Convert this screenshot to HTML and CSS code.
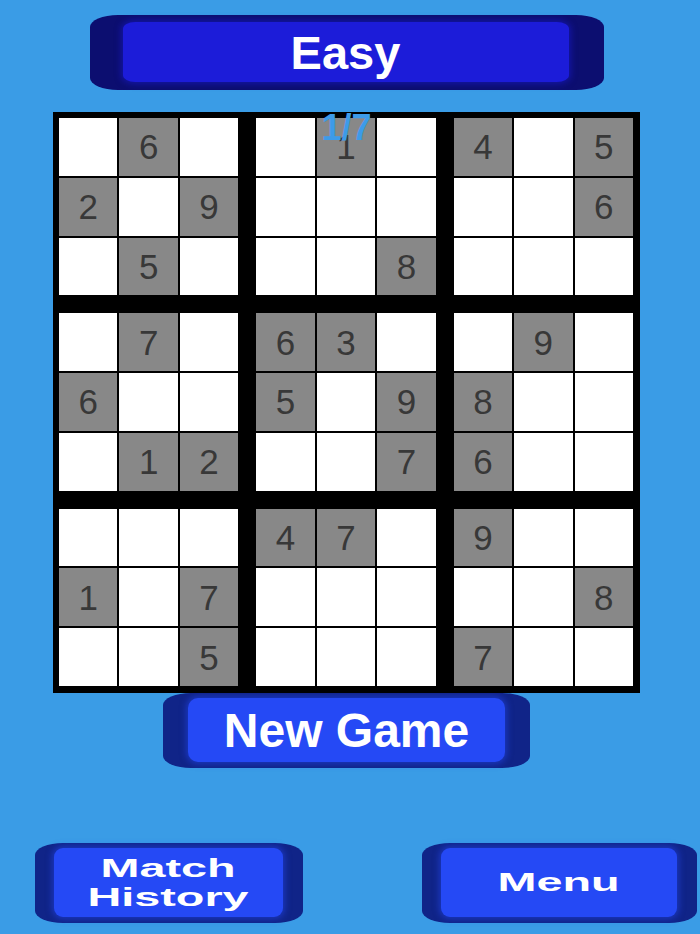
FILE: index.html
```html
<!DOCTYPE html>
<html lang="en">
<head>
    <meta charset="UTF-8">
    <title>Sudoku - Easy</title>
    <link rel="stylesheet" href="styles.css">
    <script>
        // givens, row by row, 0 = empty
        var puzzle = '060010405' + '209000006' + '050008000' +
                     '070630090' + '600509800' + '012007600' +
                     '000470900' + '107000008' + '005000700';

        function buildBoard() {
            const board = document.getElementById('board');
            for (let b = 0; b < 9; b++) {
                const block = document.createElement('div');
                block.className = 'block';
                for (let i = 0; i < 9; i++) {
                    const row = Math.floor(b / 3) * 3 + Math.floor(i / 3);
                    const col = (b % 3) * 3 + (i % 3);
                    const value = puzzle[row * 9 + col];
                    const cell = document.createElement('div');
                    cell.className = 'cell';
                    if (value !== '0') {
                        cell.className += ' given';
                        cell.textContent = value;
                    }
                    block.appendChild(cell);
                }
                board.appendChild(block);
            }
        }
        window.onload = buildBoard;
    </script>
</head>
<body>
    <div class="screen">
        <div class="play">
            <div class="btn btn-title"><div class="btn-face">Easy</div></div>
            <div class="board-wrap">
                <div class="board" id="board"></div>
                <div class="puzzle-count">1/7</div>
            </div>
            <div class="btn btn-new"><div class="btn-face">New Game</div></div>
        </div>
        <div class="bottom-bar">
            <div class="btn btn-small btn-history"><div class="btn-face"><span class="wide">Match<br>History</span></div></div>
            <div class="btn btn-small btn-menu"><div class="btn-face"><span class="wide">Menu</span></div></div>
        </div>
    </div>
</body>
</html>
```

FILE: styles.css
```css
body {
    margin: 0;
    padding: 0;
    background: #3a9ce6;
    font-family: "Liberation Sans", Arial, sans-serif;
}
.screen {
    width: 700px;
    height: 934px;
    display: flex;
    flex-direction: column;
}
.play {
    width: 693px;
    padding-top: 15px;
    display: flex;
    flex-direction: column;
    align-items: center;
}

/* raised pill buttons */
.btn {
    box-sizing: border-box;
    display: flex;
    background: #0c0e70;
    border-radius: 28px / 12px;
}
.btn-face {
    flex: 1;
    display: flex;
    align-items: center;
    justify-content: center;
    color: #fff;
    font-weight: bold;
}
.btn-title {
    width: 514px;
    height: 75px;
    padding: 7px 35px 8px 33px;
    margin-bottom: 22px;
}
.btn-title .btn-face {
    background: #1c1cd9;
    border-radius: 12px / 7px;
    box-shadow: 0 0 6px 2px rgba(28, 28, 217, 0.5);
    font-size: 47px;
}
.btn-new {
    width: 367px;
    height: 75px;
    padding: 5px 25px 6px 25px;
    background: #102488;
}
.btn-new .btn-face {
    background: #2549f5;
    border-radius: 10px;
    box-shadow: 0 0 6px 2px rgba(37, 73, 245, 0.5);
    font-size: 48px;
}
.btn-small {
    height: 80px;
    padding: 5px 20px 6px 19px;
    background: #102488;
}
.btn-small .btn-face {
    background: #2549f5;
    border-radius: 9px;
    box-shadow: 0 0 6px 2px rgba(37, 73, 245, 0.5);
    font-size: 25px;
    line-height: 29px;
}
.btn-history {
    width: 268px;
}
.btn-menu {
    width: 275px;
}
.wide {
    display: inline-block;
    text-align: center;
    transform: scaleX(1.87);
}
.bottom-bar {
    margin-top: 75px;
    padding: 0 3px 0 35px;
    display: flex;
    justify-content: space-between;
}

/* board */
.board-wrap {
    position: relative;
}
.board {
    box-sizing: border-box;
    width: 587px;
    height: 581px;
    padding: 6px 7px 7px 6px;
    background: #000;
    display: grid;
    grid-template-columns: repeat(3, 1fr);
    grid-template-rows: repeat(3, 1fr);
    gap: 18px;
}
.block {
    display: grid;
    grid-template-columns: repeat(3, 1fr);
    grid-template-rows: repeat(3, 1fr);
    gap: 2px;
}
.cell {
    background: #fff;
    display: flex;
    align-items: center;
    justify-content: center;
    font-size: 35px;
    line-height: 1;
    color: #383838;
}
.cell.given {
    background: #888;
}
.puzzle-count {
    position: absolute;
    top: -2px;
    left: 0;
    right: 0;
    text-align: center;
    font-size: 36px;
    line-height: 36px;
    font-weight: bold;
    color: #3d9be9;
}
```
